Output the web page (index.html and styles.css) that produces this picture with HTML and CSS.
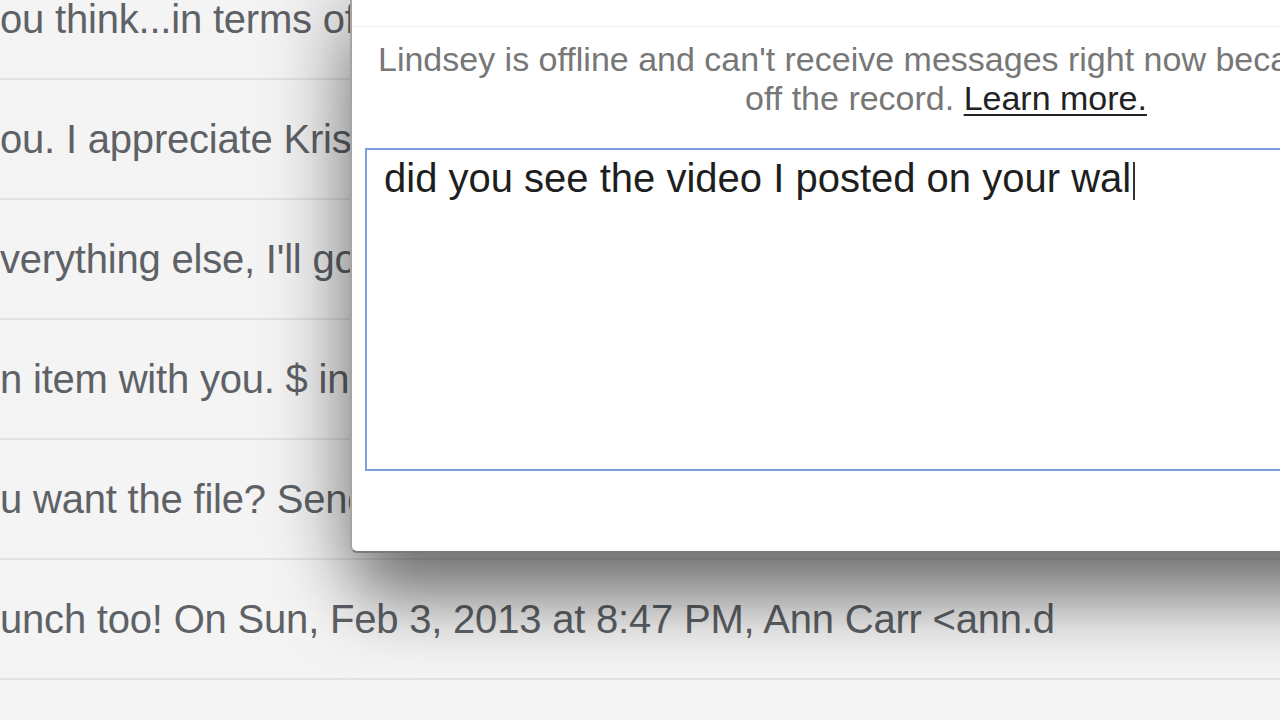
FILE: index.html
```html
<!DOCTYPE html>
<html>
<head>
<meta charset="utf-8">
<link rel="stylesheet" href="styles.css">
</head>
<body>
<div class="inbox">
  <div class="row">ou think...in terms of timing and budget for the launch next month</div>
  <div class="row">ou. I appreciate Kristen's help with the presentation last week</div>
  <div class="row">verything else, I'll go ahead and send over the final draft</div>
  <div class="row">n item with you. $ in the budget is still pending approval</div>
  <div class="row">u want the file? Send me a note and I'll share it with the team</div>
  <div class="row">unch too! On Sun, Feb 3, 2013 at 8:47 PM, Ann Carr &lt;ann.d</div>
</div>

<div class="chat">
  <div class="chat-head"></div>
  <div class="chat-body">
    <p class="notice"><span class="line1">Lindsey is offline and can't receive messages right now because this chat is</span><br>off the record. <a class="learn" href="#">Learn more.</a></p>
    <div class="input"><span class="typed">did you see the video I posted on your wal</span><span class="caret"></span></div>
  </div>
</div>
</body>
</html>
```

FILE: styles.css
```css
html, body {
  margin: 0;
  padding: 0;
  width: 1280px;
  height: 720px;
  overflow: hidden;
  background: #f4f4f4;
  font-family: "Liberation Sans", Arial, Helvetica, sans-serif;
}

.inbox {
  margin-top: -40px;
}

.row {
  box-sizing: border-box;
  height: 120px;
  line-height: 118px;
  border-bottom: 2px solid #e2e2e2;
  font-size: 40px;
  letter-spacing: -0.2px;
  color: #5e6266;
  white-space: nowrap;
  overflow: hidden;
}

.chat {
  position: absolute;
  left: 350px;
  top: -20px;
  width: 1190px;
  background: #fff;
  border-left: 2px solid #a4a4a4;
  border-bottom: 2px solid #7a7a7a;
  border-bottom-left-radius: 7px;
  box-shadow: 0 52px 70px -6px rgba(0, 0, 0, 0.5), -25px 0 80px rgba(0, 0, 0, 0.14);
}

.chat-head {
  height: 46px;
  border-bottom: 1px solid #eeeeee;
}

.chat-body {
  padding: 13px 15px 80px 13px;
}

.notice {
  margin: 0 0 30px;
  font-size: 34px;
  line-height: 39px;
  color: #777;
  text-align: center;
}

.line1 {
  white-space: nowrap;
}

.learn {
  color: #222;
  text-decoration: underline;
  text-decoration-thickness: 2px;
  text-underline-offset: 4px;
}

.input {
  box-sizing: border-box;
  height: 323px;
  border: 2px solid #7d9fdc;
  padding: 5px 17px;
  font-size: 40px;
  line-height: 46px;
  color: #1e1e1e;
  white-space: nowrap;
}

.caret {
  display: inline-block;
  width: 2px;
  height: 38px;
  margin-left: 2px;
  vertical-align: -8px;
  background: #333;
}
```
